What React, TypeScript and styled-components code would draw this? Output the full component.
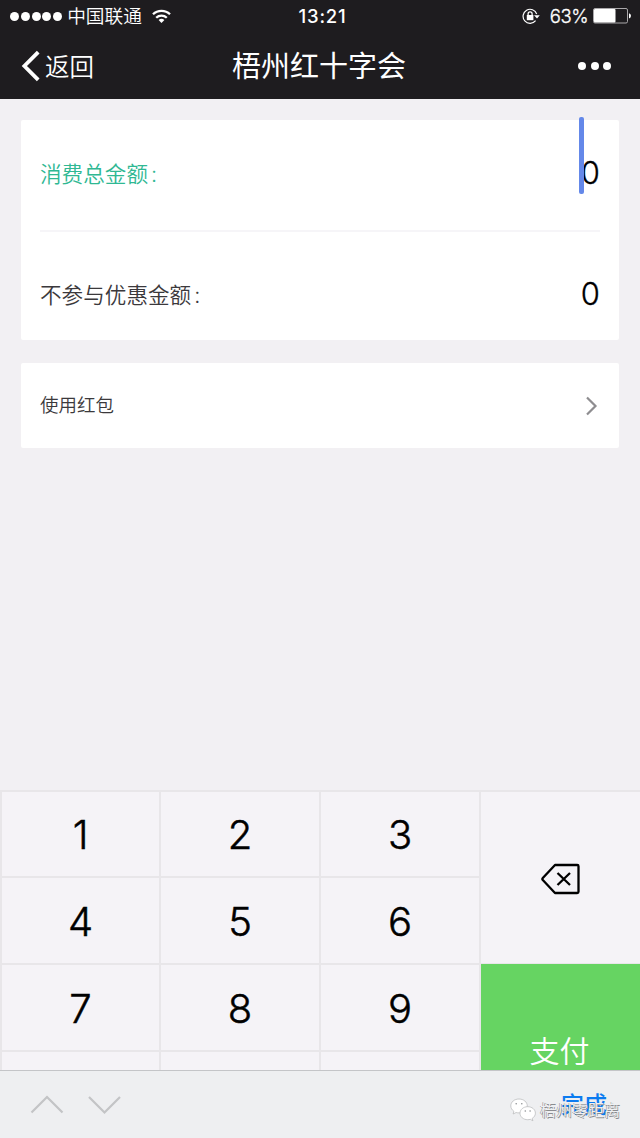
import React from 'react';
import styled, { createGlobalStyle } from 'styled-components';

const GlobalStyle = createGlobalStyle`
  * { box-sizing: border-box; }
  body { margin: 0; background: #f2f0f3; }
`;

const Screen = styled.div`
  position: relative;
  display: flex;
  flex-direction: column;
  width: 640px;
  height: 1138px;
  overflow: hidden;
  background: #f2f0f3;
  color: #000;
  font-family: Inter, 'Noto Sans CJK SC', sans-serif;
`;

const Header = styled.header`
  height: 99px;
  background: #1e1c1f;
  color: #fff;
`;

const StatusBar = styled.div`
  display: grid;
  grid-template-columns: 1fr auto 1fr;
  align-items: center;
  height: 32px;
  padding: 0 9px 0 10px;
`;

const StatusGroup = styled.div<{ $end?: boolean }>`
  display: flex;
  align-items: center;
  justify-content: ${(p) => (p.$end ? 'flex-end' : 'flex-start')};
`;

const Dots = styled.div<{ $size: number; $gap: number }>`
  display: flex;
  gap: ${(p) => p.$gap}px;
  span {
    width: ${(p) => p.$size}px;
    height: ${(p) => p.$size}px;
    border-radius: 50%;
    background: #fff;
  }
`;

const Carrier = styled.span`
  margin: 0 10px 0 5px;
  padding-top: 2px;
  font-size: 18.7px;
  line-height: 30px;
  font-weight: 350;
`;

const Clock = styled.span`
  margin-left: 4px;
  font-size: 18.5px;
  font-weight: 500;
  letter-spacing: 0.8px;
`;

const Percent = styled.span`
  margin: 0 5px 0 10px;
  font-size: 18.5px;
  font-weight: 350;
  letter-spacing: -0.5px;
  -webkit-text-stroke: 0.3px #fff;
`;

const NavBar = styled.div`
  display: grid;
  grid-template-columns: 1fr auto 1fr;
  align-items: center;
  height: 67px;
  padding: 0 29px 0 21px;
`;

const Back = styled.div`
  display: flex;
  align-items: center;
  gap: 4px;
  font-size: 24.5px;
  font-weight: 350;
`;

const Title = styled.h1`
  margin: 2px 0 0 6px;
  font-size: 29px;
  line-height: 44px;
  font-weight: 400;
`;

const More = styled.div`
  justify-self: end;
`;

const Content = styled.main`
  flex: 1;
  padding: 21px 21px 0;
`;

const Card = styled.section`
  padding: 0 19px;
  border-radius: 2px;
  background: #fff;
  margin-bottom: 23px;
`;

const Row = styled.div<{ $height: number; $divided?: boolean; $shift?: number }>`
  display: flex;
  align-items: center;
  justify-content: space-between;
  height: ${(p) => p.$height}px;
  padding-top: ${(p) => p.$shift ?? 0}px;
  border-bottom: ${(p) => (p.$divided ? '2px solid #f6f5f8' : '0')};
`;

const Label = styled.span<{ $active?: boolean; $size?: number; $lift?: number }>`
  margin-bottom: ${(p) => p.$lift ?? 0}px;
  font-family: 'Noto Sans CJK SC', sans-serif;
  font-size: ${(p) => p.$size ?? 21.6}px;
  line-height: 32px;
  font-weight: 350;
  color: ${(p) => (p.$active ? '#2fb893' : '#3b393c')};
`;

const Colon = styled.span`
  margin-left: 3px;
  font-family: Inter, sans-serif;
`;

const Amount = styled.span<{ $lift?: number }>`
  position: relative;
  margin-bottom: ${(p) => p.$lift ?? 0}px;
  font-size: 31px;
  line-height: 38px;
  font-weight: 350;
  -webkit-text-stroke: 0.3px #000;
`;

const Caret = styled.i`
  position: absolute;
  left: -1.5px;
  top: -37px;
  width: 5px;
  height: 77px;
  border-radius: 2px;
  background: #6488e9;
`;

const Chevron = styled.svg`
  margin-right: -1px;
`;

const Keypad = styled.div`
  display: grid;
  grid-template-columns: 157px 158px 158px 159px;
  grid-template-rows: 84px 85px 85px 85px;
  gap: 2px;
  height: 280px;
  padding: 2px 0 0 2px;
  overflow: hidden;
  background: #e8e6e9;
`;

const Key = styled.div`
  display: flex;
  align-items: center;
  justify-content: center;
  padding-top: 2px;
  background: #f5f3f7;
  font-size: 40px;
  line-height: 48px;
  font-weight: 350;
  -webkit-text-stroke: 0.5px #000;
`;

const DeleteKey = styled(Key)`
  grid-column: 4;
  grid-row: 1 / span 2;
`;

const PayKey = styled(Key)`
  grid-column: 4;
  grid-row: 3 / span 2;
  margin-top: -1px;
  padding: 0 2px 0 0;
  background: #66d462;
  color: #fff;
  font-size: 30px;
  -webkit-text-stroke: 0;
`;

const Toolbar = styled.footer`
  display: flex;
  align-items: center;
  height: 68px;
  padding: 0 33px 0 30px;
  border-top: 1px solid #c4c5c8;
  background: #eeeff1;
`;

const Done = styled.span`
  margin: 1px 0 0 auto;
  font-size: 23px;
  font-weight: 500;
  line-height: 34px;
  color: #0b7bf0;
`;

const Watermark = styled.div`
  position: absolute;
  left: 510px;
  top: 1096px;
  display: flex;
  align-items: center;
  gap: 4px;
  font-size: 16px;
  line-height: 28px;
  color: #eef0f2;
  text-shadow: 0.7px 0.7px 0.4px #8a8c8f, -0.5px -0.5px 0.4px #85878a;
`;

const Repeat = ({ n }: { n: number }) => (
  <>
    {Array.from({ length: n }, (_, i) => (
      <span key={i} />
    ))}
  </>
);

const WifiIcon = () => (
  <svg width="19" height="15" viewBox="0 0 19 15" fill="none" stroke="#fff" strokeWidth="2.3">
    <path d="M1 5.3a12.2 12.2 0 0 1 17 0" />
    <path d="M4.2 8.7a7.6 7.6 0 0 1 10.6 0" />
    <path d="M9.5 14 6.6 11.1a4.2 4.2 0 0 1 5.8 0z" fill="#fff" stroke="none" />
  </svg>
);

const LockIcon = () => (
  <svg width="18" height="16" viewBox="0 0 18 16" fill="none" stroke="#fff">
    <path d="M13.6 12.6A7 7 0 1 1 14.7 6" strokeWidth="1.2" />
    <path d="M12 7.2h5.8L15 10.4z" fill="#fff" stroke="none" />
    <rect x="4.8" y="7" width="6.6" height="5.2" fill="#fff" stroke="none" />
    <path d="M6.1 7.5V5.8a2 2 0 0 1 4 0v1.7" strokeWidth="1.3" />
  </svg>
);

const BatteryIcon = () => (
  <svg width="38" height="16" viewBox="0 0 38 16">
    <rect x="0.5" y="0.5" width="34" height="14.5" rx="1.5" fill="none" stroke="#aaa8ab" />
    <rect x="1" y="1" width="21.5" height="13.5" rx="1" fill="#fff" />
    <path d="M36 5.2q2 .6 2 2.6t-2 2.6z" fill="#fff" />
  </svg>
);

const BackIcon = () => (
  <svg width="20" height="32" viewBox="0 0 20 32" fill="none" stroke="#fff" strokeWidth="3.8">
    <path d="M17.2 2.2 3.4 16l13.8 13.8" />
  </svg>
);

const ChevronIcon = () => (
  <Chevron width="16" height="20" viewBox="0 0 16 20" fill="none" stroke="#8e8d90" strokeWidth="2.2">
    <path d="m2 1.5 8.5 8.5L2 18.5" />
  </Chevron>
);

const DeleteIcon = () => (
  <svg width="40" height="32" viewBox="0 0 40 32" fill="none" stroke="#000" strokeWidth="2.3" strokeLinejoin="round">
    <path d="M14 2h22.2q1.300 0 1.300 1.300v25.400q0 1.300-1.300 1.300H14L1.800 17q-.9-1 0-2z" />
    <path d="m16.500 10 12.500 12M29 10 16.500 22" />
  </svg>
);

const ArrowsIcon = () => (
  <svg width="92" height="20" viewBox="0 0 92 20" fill="none" stroke="#c3c4c6" strokeWidth="2.2">
    <path d="M1.5 17.5 17 2l15.5 15.5" />
    <path d="M59 2l15.5 15.5L90 2" />
  </svg>
);

const WechatIcon = () => (
  <svg width="26" height="24" viewBox="0 0 26 24" fill="#fff" stroke="#b4b6b8" strokeWidth="0.7">
    <path d="M9 1C4.3 1 .8 4 .8 7.9c0 2.200 1.200 4.100 3.100 5.400l-.8 2.700 3-1.500c1 .3 2 .4 3 .4 4.700 0 8.200-3 8.200-6.900S13.700 1 9 1z" />
    <path d="M17.7 8.700c-4.400 0-7.700 2.900-7.700 6.500s3.300 6.500 7.700 6.500c.9 0 1.800-.1 2.600-.4l2.600 1.500-.7-2.400c1.900-1.200 3.200-3 3.200-5.200 0-3.600-3.300-6.500-7.700-6.500z" />
    <g fill="#8d9093" stroke="none">
      <circle cx="6.2" cy="5.8" r=".8" /><circle cx="11.8" cy="5.8" r=".8" />
      <circle cx="15.3" cy="13" r=".8" /><circle cx="20.1" cy="13" r=".8" />
    </g>
  </svg>
);

export default function App() {
  return (
    <Screen>
      <GlobalStyle />
      <Header>
        <StatusBar>
          <StatusGroup>
            <Dots $size={9} $gap={1.8}><Repeat n={5} /></Dots>
            <Carrier>中国联通</Carrier>
            <WifiIcon />
          </StatusGroup>
          <Clock>13:21</Clock>
          <StatusGroup $end>
            <LockIcon />
            <Percent>63%</Percent>
            <BatteryIcon />
          </StatusGroup>
        </StatusBar>
        <NavBar>
          <Back><BackIcon />返回</Back>
          <Title>梧州红十字会</Title>
          <More><Dots $size={8} $gap={4.3}><Repeat n={3} /></Dots></More>
        </NavBar>
      </Header>
      <Content>
        <Card>
          <Row $height={112} $divided>
            <Label $active $lift={4}>消费总金额<Colon>:</Colon></Label>
            <Amount $lift={4}><Caret />0</Amount>
          </Row>
          <Row $height={108} $shift={17}>
            <Label>不参与优惠金额<Colon>:</Colon></Label>
            <Amount $lift={1}>0</Amount>
          </Row>
        </Card>
        <Card>
          <Row $height={85}>
            <Label $size={18.5} $lift={4}>使用红包</Label>
            <ChevronIcon />
          </Row>
        </Card>
      </Content>
      <Keypad>
        {[1, 2, 3].map((n) => <Key key={n}>{n}</Key>)}
        <DeleteKey><DeleteIcon /></DeleteKey>
        {[4, 5, 6, 7, 8, 9].map((n) => <Key key={n}>{n}</Key>)}
        <PayKey>支付</PayKey>
        <Key /><Key /><Key />
      </Keypad>
      <Toolbar>
        <ArrowsIcon />
        <Done>完成</Done>
      </Toolbar>
      <Watermark><WechatIcon />梧州零距离</Watermark>
    </Screen>
  );
}
